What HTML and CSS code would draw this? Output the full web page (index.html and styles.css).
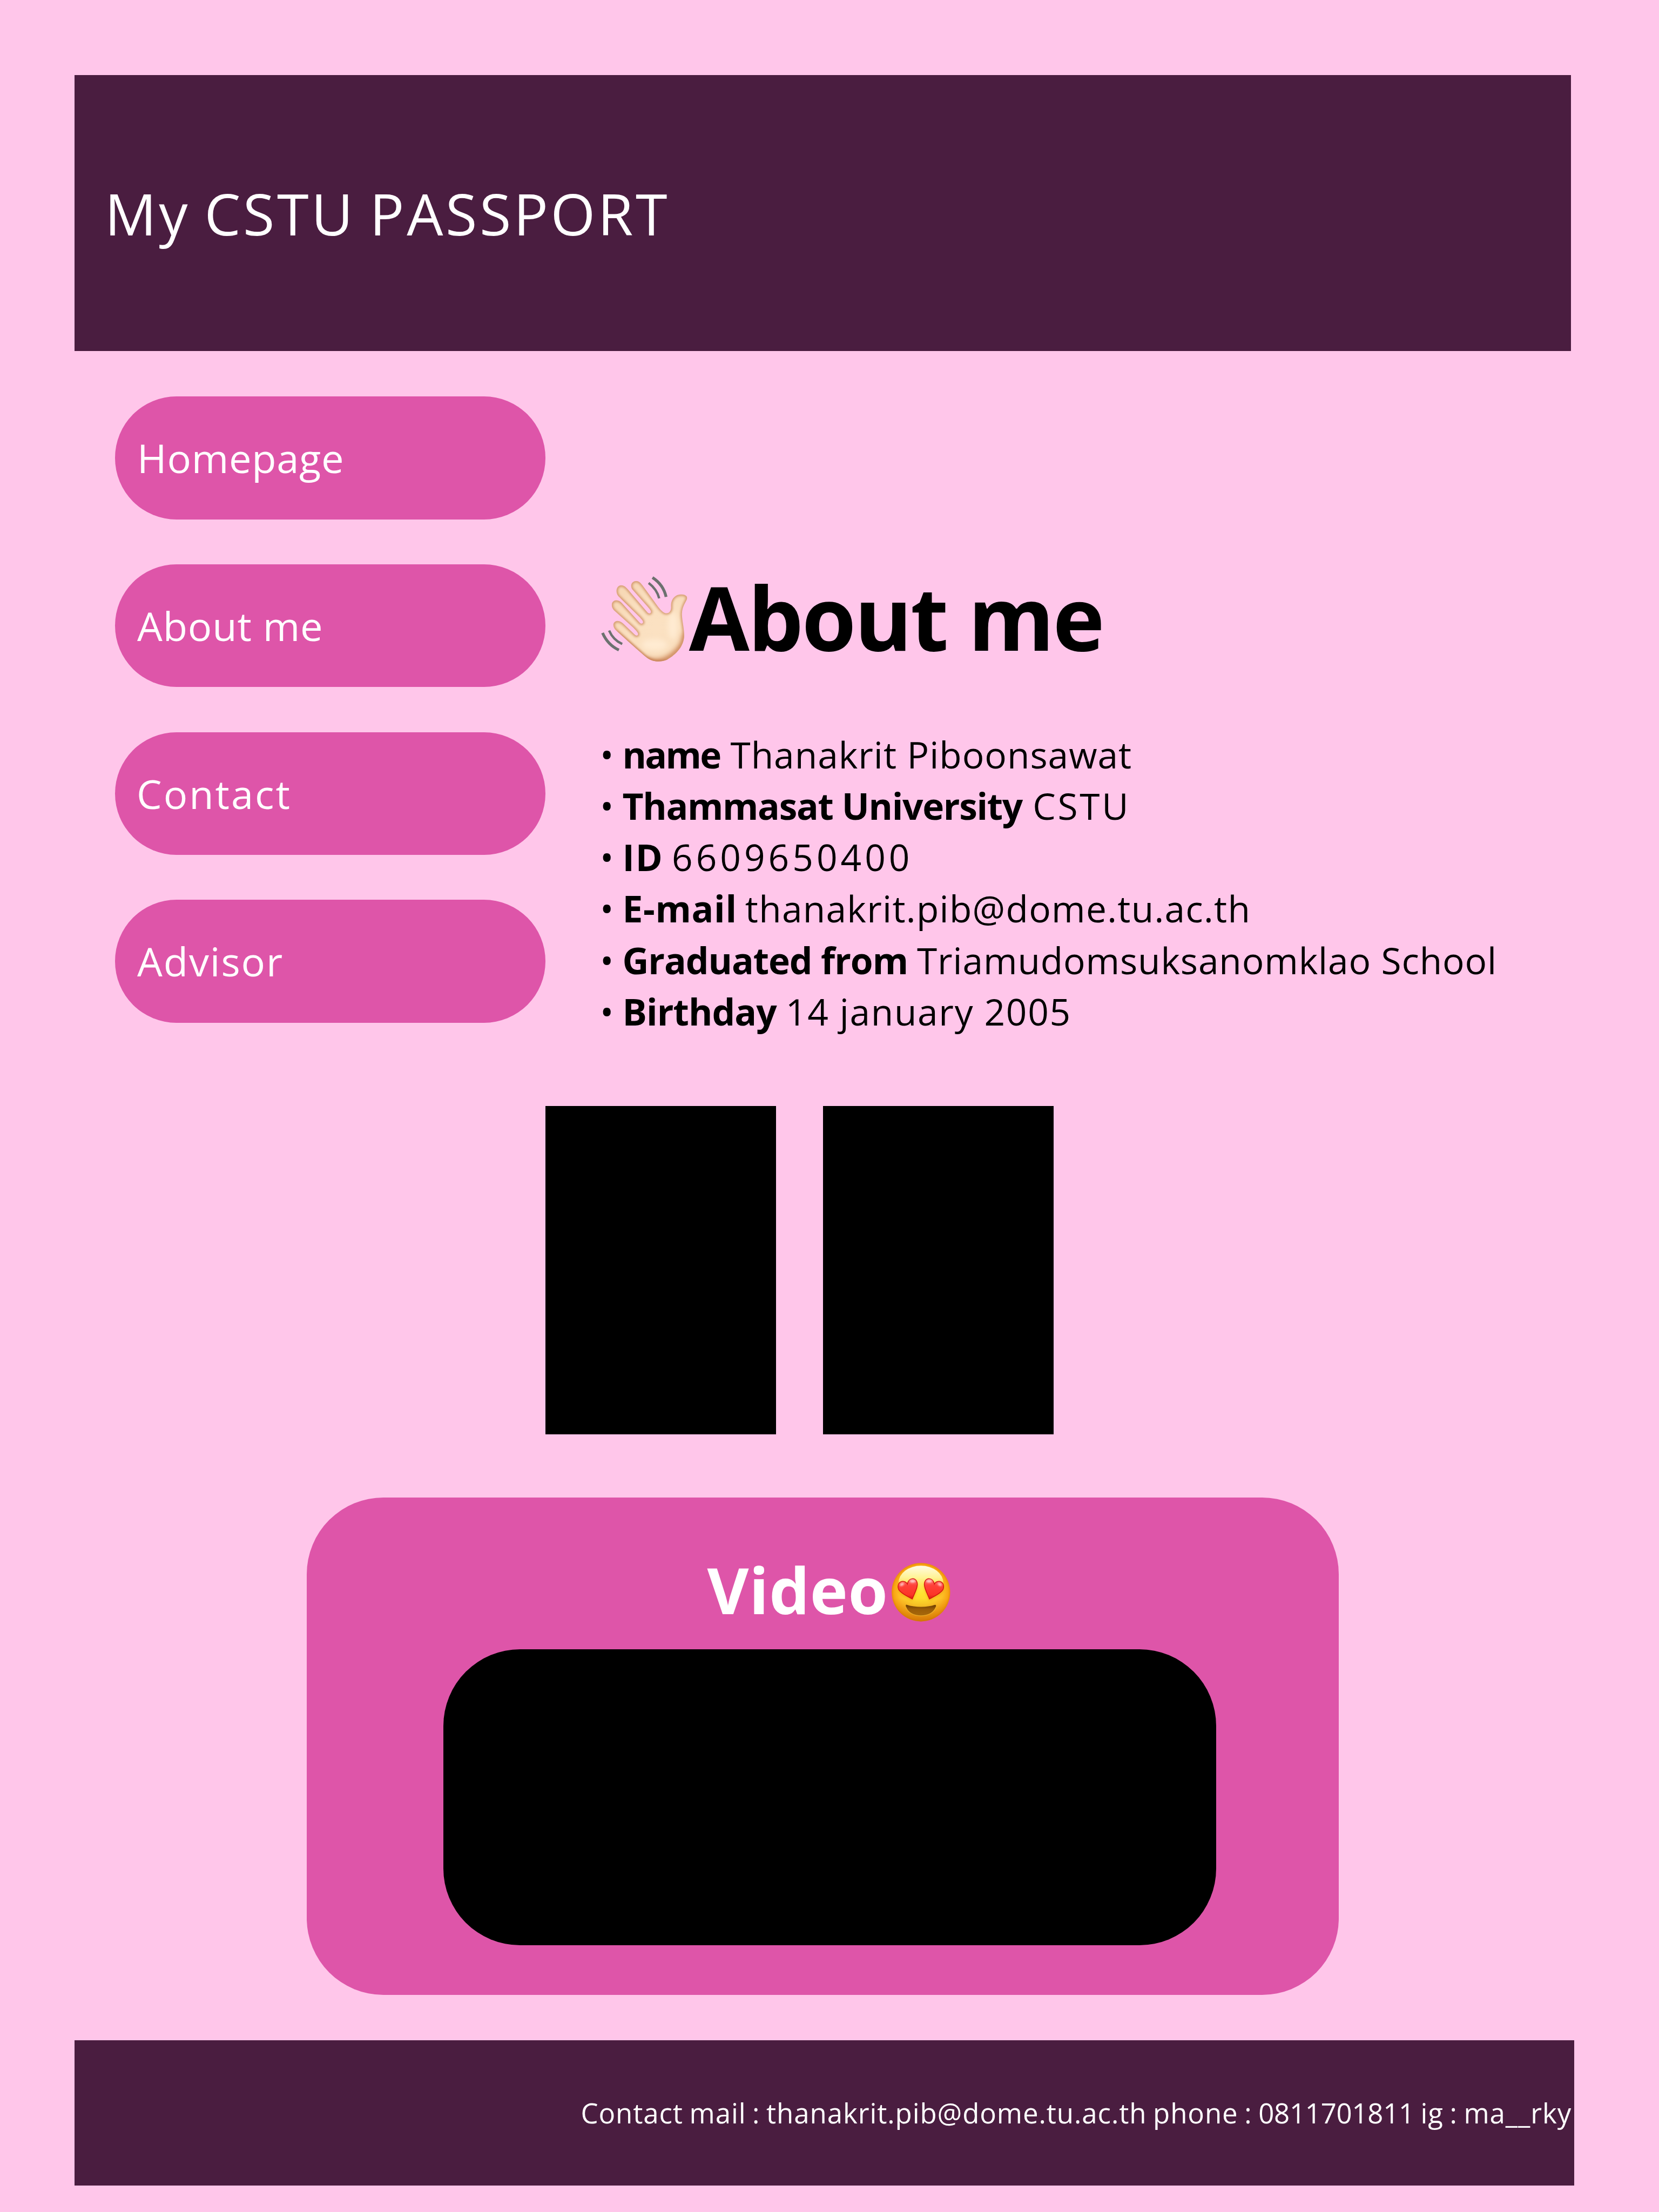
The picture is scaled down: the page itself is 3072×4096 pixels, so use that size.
FILE: index.html
```html
<!DOCTYPE html>
<html lang="en">
<head>
<meta charset="utf-8">
<title>My CSTU PASSPORT</title>
<link rel="stylesheet" href="styles.css">
</head>
<body>
<header class="banner"><div class="banner-title">My CSTU PASSPORT</div></header>

<main class="main">
  <nav class="menu">
    <a class="pill home">Homepage</a>
    <a class="pill about-link">About me</a>
    <a class="pill contact">Contact</a>
    <a class="pill advisor">Advisor</a>
  </nav>
  <section class="about">
    <h1 class="heading">
      <svg class="wave" viewBox="90 85 550 550" aria-hidden="true">
        <defs>
          <path id="hand" d="M290 172C275 142 295 121 316 121C334 122 345 134 356 149L430 250C452 282 473 310 493 320C520 331 536 308 534 282C532 248 546 222 572 210C598 201 634 205 635 228C632 250 604 272 602 328C603 372 616 412 616 462C615 530 566 580 508 614C462 632 412 626 376 595C330 558 250 484 192 432C164 405 169 374 199 371C216 371 229 381 241 393L307 456C318 468 332 462 327 448C322 436 308 424 298 413L177 304C153 276 162 244 192 242C210 243 222 253 233 266L338 382C350 394 363 387 358 373C354 364 346 358 340 350L205 217C183 189 193 150 222 148C240 148 251 158 262 171L386 317C398 331 413 322 407 308C402 297 394 290 388 282Z"/>
          <clipPath id="handClip"><use href="#hand"/></clipPath>
          <radialGradient id="skin" gradientUnits="userSpaceOnUse" cx="440" cy="410" r="290">
            <stop offset="0" stop-color="#fbe1c2"/><stop offset=".6" stop-color="#fae0c0"/><stop offset="1" stop-color="#f7d9b6"/>
          </radialGradient>
          <filter id="soft" x="-20%" y="-20%" width="140%" height="140%"><feGaussianBlur stdDeviation="7"/></filter>
          <filter id="softer" x="-40%" y="-40%" width="180%" height="180%"><feGaussianBlur stdDeviation="16"/></filter>
        </defs>
        <g clip-path="url(#handClip)">
          <use href="#hand" fill="url(#skin)"/>
          <ellipse cx="545" cy="400" rx="30" ry="85" fill="#ffebd2" filter="url(#softer)"/>
          <ellipse cx="430" cy="520" rx="80" ry="35" fill="#ffebd2" filter="url(#softer)"/>
          <path d="M370 612C430 640 500 625 550 580C600 540 620 500 622 450" fill="none" stroke="#cf8a5c" stroke-width="34" filter="url(#softer)"/>
          <use href="#hand" fill="none" stroke="#d2946a" stroke-width="17" filter="url(#soft)"/>
          <path d="M192 440L376 603C420 630 460 630 508 620" fill="none" stroke="#c47c50" stroke-width="12" filter="url(#soft)"/>
        </g>
        <g fill="none" stroke="#6c716f">
          <path d="M418 100C461 128 492 170 503 221" stroke-width="18"/>
          <path d="M394 134C427 159 450 191 460 230" stroke-width="15"/>
          <path d="M106 446C127 494 161 531 208 553" stroke-width="18"/>
          <path d="M147 431C164 470 192 499 229 515" stroke-width="15"/>
        </g>
      </svg>
      <span class="heading-text">About me</span>
    </h1>
    <ul class="facts">
      <li class="fact f-name"><span class="dot">•</span><b>name</b><span class="value">Thanakrit Piboonsawat</span></li>
      <li class="fact f-uni"><span class="dot">•</span><b>Thammasat University</b><span class="value">CSTU</span></li>
      <li class="fact f-id"><span class="dot">•</span><b>ID</b><span class="value">6609650400</span></li>
      <li class="fact f-mail"><span class="dot">•</span><b>E-mail</b><span class="value">thanakrit.pib@dome.tu.ac.th</span></li>
      <li class="fact f-school"><span class="dot">•</span><b>Graduated from</b><span class="value">Triamudomsuksanomklao School</span></li>
      <li class="fact f-birth"><span class="dot">•</span><b>Birthday</b><span class="value">14 january 2005</span></li>
    </ul>
  </section>
</main>

<div class="gallery"><div class="photo"></div><div class="photo"></div></div>

<section class="video">
  <h2 class="video-title"><span>Video</span>
    <svg class="smiley" viewBox="112 107 366 367" aria-hidden="true">
      <defs>
        <radialGradient id="face" gradientUnits="userSpaceOnUse" cx="295" cy="290" r="184">
          <stop offset="0" stop-color="#ffe32d"/><stop offset=".45" stop-color="#ffd72e"/><stop offset=".75" stop-color="#fdbd25"/><stop offset=".92" stop-color="#f9a513"/><stop offset="1" stop-color="#e88b08"/>
        </radialGradient>
        <linearGradient id="shade" x1="0" y1="0" x2="0" y2="1">
          <stop offset=".6" stop-color="#d97c06" stop-opacity="0"/><stop offset="1" stop-color="#c96b05" stop-opacity=".75"/>
        </linearGradient>
        <linearGradient id="gloss" x1="0" y1="0" x2="0" y2="1">
          <stop offset="0" stop-color="#fffde6"/><stop offset=".35" stop-color="#fff8a0" stop-opacity=".9"/><stop offset=".9" stop-color="#ffe940" stop-opacity="0"/>
        </linearGradient>
        <linearGradient id="heart" x1="0" y1="0" x2="0" y2="1">
          <stop offset="0" stop-color="#ff7b78"/><stop offset=".35" stop-color="#ff4038"/><stop offset=".8" stop-color="#fb3527"/><stop offset="1" stop-color="#d31a10"/>
        </linearGradient>
        <linearGradient id="mouth" x1="0" y1="0" x2="0" y2="1">
          <stop offset="0" stop-color="#6a3c02"/><stop offset=".4" stop-color="#995c08"/><stop offset="1" stop-color="#a8690a"/>
        </linearGradient>
        <path id="eye" d="M241 333C215 318 167 297 155 272C145 245 160 222 183 223C196 224 205 230 210 240C214 218 228 205 246 206C268 209 276 232 271 254C266 280 250 308 241 333Z"/>
        <filter id="glow" x="-20%" y="-20%" width="140%" height="140%"><feGaussianBlur stdDeviation="7"/></filter>
        <filter id="shine" x="-60%" y="-60%" width="220%" height="220%"><feGaussianBlur stdDeviation="5"/></filter>
      </defs>
      <circle cx="295" cy="290.500" r="183" fill="url(#face)"/>
      <circle cx="295" cy="290.500" r="183" fill="url(#shade)"/>
      <ellipse cx="295" cy="232" rx="140" ry="107" fill="url(#gloss)"/>
      <g>
        <use href="#eye" y="12" fill="#e58f0c" opacity=".55" filter="url(#glow)"/>
        <use href="#eye" fill="url(#heart)" stroke="#d5160f" stroke-width="5"/>
        <ellipse cx="176" cy="242" rx="14" ry="9" fill="#fff" opacity=".65" transform="rotate(-30 176 242)" filter="url(#shine)"/>
        <ellipse cx="243" cy="222" rx="18" ry="9" fill="#fff" opacity=".65" filter="url(#shine)"/>
      </g>
      <g transform="matrix(-1 0 0 1 589 0)">
        <use href="#eye" y="12" fill="#e58f0c" opacity=".55" filter="url(#glow)"/>
        <use href="#eye" fill="url(#heart)" stroke="#d5160f" stroke-width="5"/>
        <ellipse cx="176" cy="242" rx="14" ry="9" fill="#fff" opacity=".65" transform="rotate(-30 176 242)" filter="url(#shine)"/>
        <ellipse cx="243" cy="222" rx="18" ry="9" fill="#fff" opacity=".65" filter="url(#shine)"/>
      </g>
      <path d="M207 370C260 387 330 387 382 370C390 368 390 374 389 379C379 416 342 438 295 438C247 438 210 416 201 379C199 371 201 367 207 370Z" fill="url(#mouth)"/>
      <path d="M202 386C214 418 249 438 295 438C341 438 376 418 388 386" fill="none" stroke="#ffc93a" stroke-width="4" opacity=".6"/>
    </svg>
  </h2>
  <div class="player"></div>
</section>

<footer class="footer"><div class="footer-text">Contact mail : thanakrit.pib@dome.tu.ac.th phone : <span class="phone">0811701811</span> ig : ma__rky</div></footer>
</body>
</html>
```
FILE: styles.css
```css
* { box-sizing: border-box; }

body {
  margin: 0;
  width: 3072px;
  height: 4096px;
  padding-top: 138.8px;
  overflow: hidden;
  background: #ffc6ea;
  color: #000;
  font-family: "Open Sans", "Noto Sans", sans-serif;
  font-kerning: normal;
}

.banner {
  display: flex;
  align-items: center;
  width: 2771.3px;
  height: 511.7px;
  margin-left: 137.7px;
  padding-left: 56.3px;
  background: #4a1d40;
  color: #fff;
  font-size: 106.4px;
}
.banner-title { letter-spacing: 4.6px; word-spacing: -6px; }

.main {
  display: flex;
  align-items: flex-start;
  gap: 101.3px;
  padding: 83.7px 0 0 213.1px;
}

.menu {
  display: flex;
  flex-direction: column;
  gap: 83.2px;
  width: 796.7px;
}
.pill {
  display: flex;
  align-items: center;
  height: 227.5px;
  padding-left: 41px;
  border-radius: 113.75px;
  background: #de55a9;
  color: #fff;
  font-size: 74px;
}
.home { letter-spacing: .75px; }
.about-link { letter-spacing: .85px; }
.contact { letter-spacing: 3px; padding-left: 40px; }
.advisor { letter-spacing: 1.9px; }

.about { padding-top: 308px; }
.heading {
  display: flex;
  align-items: center;
  height: 200px;
  margin: 0 0 108px;
  font-size: 162.5px;
  font-weight: 700;
  line-height: 200px;
}
.heading-text { letter-spacing: -3px; }
.wave {
  width: 163px;
  height: 163px;
  margin-top: 9px;
  margin-right: 1.7px;
}

.facts {
  margin: 0;
  padding: 0;
  list-style: none;
  font-size: 67.6px;
  line-height: 95.1px;
}
.fact { display: flex; height: 95.1px; white-space: nowrap; }
.fact b { font-weight: 700; margin-right: 17px; }
.dot { width: 41.4px; }
.f-name b { letter-spacing: -2.6px; margin-right: 18.8px; }
.f-name .value { letter-spacing: 1px; }
.f-uni b { letter-spacing: -1.3px; margin-right: 19.3px; }
.f-uni .value { letter-spacing: 3.7px; }
.f-id b { letter-spacing: 1.8px; margin-right: 15.5px; }
.f-id .value { letter-spacing: 6px; }
.f-mail b { letter-spacing: .7px; margin-right: 15px; }
.f-mail .value { letter-spacing: 1.3px; }
.f-school b { letter-spacing: -1.05px; }
.f-school .value { letter-spacing: .88px; }
.f-birth b { letter-spacing: -.9px; }
.f-birth .value { letter-spacing: 1.7px; }

.gallery {
  display: flex;
  gap: 86.7px;
  margin-top: 127px;
  padding-left: 1010px;
}
.photo { width: 427px; height: 608px; background: #000; }

.video {
  width: 1910.6px;
  height: 921.3px;
  margin-top: 117.4px;
  margin-left: 568.1px;
  padding-top: 90px;
  border-radius: 142px;
  background: #de55a9;
}
.video-title {
  display: flex;
  align-items: center;
  justify-content: center;
  height: 160px;
  margin: 0 0 31px;
  padding-left: 22.4px;
  color: #fff;
  font-size: 118.5px;
  font-weight: 700;
  line-height: 160px;
  letter-spacing: .7px;
}
.smiley { width: 108.6px; height: 108.6px; margin: 10.6px 0 0 6.4px; }
.player {
  width: 1431px;
  height: 548.1px;
  margin-left: 252.6px;
  border-radius: 142px;
  background: #000;
}

.footer {
  display: flex;
  align-items: center;
  justify-content: flex-end;
  width: 2777px;
  height: 269.3px;
  margin-top: 83.3px;
  margin-left: 137.7px;
  padding-right: 4.5px;
  background: #4a1d40;
  color: #fff;
  font-size: 51px;
  white-space: nowrap;
}
.footer-text { letter-spacing: .9px; word-spacing: -2.5px; }
.phone { letter-spacing: -.3px; }
```
